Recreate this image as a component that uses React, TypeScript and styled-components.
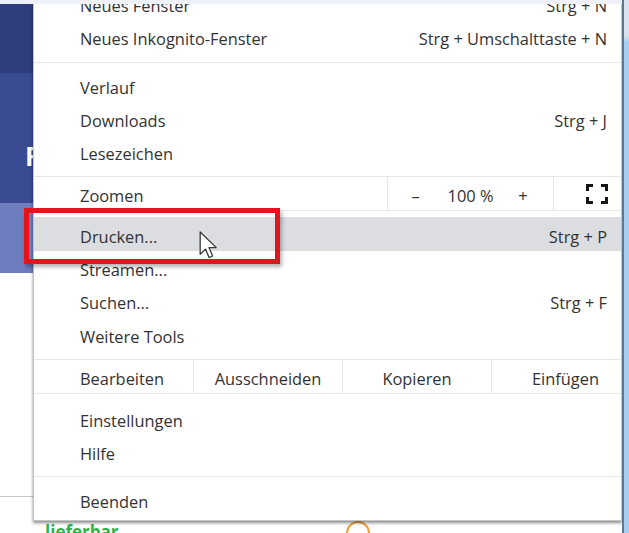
import React from "react";
import styled, { createGlobalStyle } from "styled-components";

const textDark = "#333333";
const lineLight = "#e7e7e7";
const menuFont = `"Open Sans", "Noto Sans", "DejaVu Sans", sans-serif`;

const GlobalStyle = createGlobalStyle`
  html, body {
    margin: 0;
    padding: 0;
    background: #ffffff;
  }
  body {
    width: 629px;
    height: 533px;
    overflow: hidden;
    font-family: ${menuFont};
  }
  *, *::before, *::after {
    box-sizing: border-box;
  }
`;

const Screen = styled.div`
  width: 629px;
  height: 533px;
  display: grid;
  grid-template-columns: 622px 7px;
  overflow: hidden;
`;

const Viewport = styled.div`
  position: relative;
  height: 533px;
  overflow: hidden;
`;

const WindowFrame = styled.div`
  border-left: 2px solid #61768f;
  background: linear-gradient(
    to bottom,
    #d8e3ef 0,
    #d8e3ef 36px,
    #a9cdef 42px,
    #a9cdef 100%
  );
`;

const TopStrip = styled.div`
  position: absolute;
  top: 0;
  left: 0;
  right: 0;
  height: 4px;
  background: #eef1f8;
  z-index: 4;
`;

/* page behind the menu */

const Backdrop = styled.div`
  display: flex;
  flex-direction: column;
  height: 100%;
`;

const Band = styled.div<{ $tone: string; $height: number }>`
  flex-shrink: 0;
  height: ${(p) => p.$height}px;
  background: ${(p) => p.$tone};
  padding: 70px 0 0 25px;
`;

const BandLetter = styled.span`
  display: block;
  color: #ffffff;
  font-family: ${menuFont};
  font-weight: 700;
  font-size: 26px;
  line-height: 1;
`;

const WhiteArea = styled.div`
  flex-shrink: 0;
  display: flex;
  flex-direction: column;
`;

const Rule = styled.div`
  margin-top: 223px;
  height: 1px;
  background: #c9c9c9;
`;

const BottomRow = styled.div`
  display: flex;
  align-items: flex-start;
  margin-top: 24px;
  padding-left: 45px;
`;

const StockLabel = styled.span`
  width: 301px;
  margin-top: 2px;
  color: #2eb24b;
  font-family: ${menuFont};
  font-weight: 700;
  font-size: 17px;
  line-height: 1;
`;

const StatusRing = styled.span`
  width: 24px;
  height: 24px;
  border-radius: 50%;
  border: 2px solid #f0a23a;
`;

/* the menu */

const MenuPanel = styled.div`
  position: absolute;
  left: 33px;
  top: -21px;
  width: 589px;
  background: #ffffff;
  border: 1px solid #c4c4c4;
  border-top: none;
  box-shadow: 0 2px 3px rgba(0, 0, 0, 0.45);
  padding: 8px 0 3px;
  font-family: ${menuFont};
  font-size: 16.4px;
  color: ${textDark};
  z-index: 1;
`;

const MenuItem = styled.div<{ $active?: boolean }>`
  height: 33.3px;
  display: flex;
  align-items: center;
  justify-content: space-between;
  padding: 4px 14px 0 46px;
  white-space: nowrap;
  background: ${(p) => (p.$active ? "#dcdde1" : "transparent")};
`;

const Shortcut = styled.span`
  color: ${textDark};
`;

const Separator = styled.div`
  padding: 8px 0 6px;
  &::after {
    content: "";
    display: block;
    height: 1px;
    background: ${lineLight};
  }
`;

const ButtonRow = styled.div<{ $gapBelow: number }>`
  display: flex;
  height: 35px;
  margin: 8px 0 ${(p) => p.$gapBelow}px;
  border-top: 1px solid ${lineLight};
  border-bottom: 1px solid ${lineLight};
  white-space: nowrap;
`;

const RowLabel = styled.div<{ $width: number }>`
  width: ${(p) => p.$width}px;
  display: flex;
  align-items: center;
  padding: 4px 0 0 46px;
`;

const RowCell = styled.div<{ $width?: number; $inset?: number }>`
  ${(p) => (p.$width ? `width: ${p.$width}px;` : "flex: 1;")}
  display: flex;
  align-items: center;
  justify-content: center;
  padding: 4px 0 0 ${(p) => p.$inset ?? 0}px;
  border-left: 1px solid ${lineLight};
`;

const ZoomControls = styled.div`
  width: 166px;
  display: grid;
  grid-template-columns: 55px 55px 1fr;
  align-items: center;
  padding: 4px 5px 0 0;
  border-left: 1px solid ${lineLight};
`;

const ZoomPart = styled.span`
  text-align: center;
`;

const FullscreenCell = styled.div`
  flex: 1;
  display: flex;
  align-items: center;
  justify-content: flex-end;
  padding-right: 13px;
  border-left: 1px solid ${lineLight};
`;

/* annotation drawn over the screenshot */

const Callout = styled.div`
  position: absolute;
  left: 24px;
  top: 208px;
  width: 256px;
  height: 56px;
  border: 5px solid #e5131b;
  box-shadow: 2px 3px 4px rgba(0, 0, 0, 0.3);
  z-index: 2;
`;

const Pointer = styled.svg`
  position: absolute;
  left: 199px;
  top: 231px;
  z-index: 3;
`;

const FullscreenIcon = () => (
  <svg width="22" height="20" viewBox="0 0 22 20">
    <g fill="none" stroke="#151515" strokeWidth="3">
      <path d="M1.5 7V1.5H7" />
      <path d="M15 1.5H20.5V7" />
      <path d="M1.5 13V18.5H7" />
      <path d="M15 18.5H20.5V13" />
    </g>
  </svg>
);

const menuTop = [
  { label: "Neues Fenster", keys: "Strg + N" },
  { label: "Neues Inkognito-Fenster", keys: "Strg + Umschalttaste + N" },
];

const menuHistory = [
  { label: "Verlauf" },
  { label: "Downloads", keys: "Strg + J" },
  { label: "Lesezeichen" },
];

const menuTools = [
  { label: "Drucken...", keys: "Strg + P", active: true },
  { label: "Streamen..." },
  { label: "Suchen...", keys: "Strg + F" },
  { label: "Weitere Tools" },
];

const menuSettings = [{ label: "Einstellungen" }, { label: "Hilfe" }];

type Entry = { label: string; keys?: string; active?: boolean };

const Items = ({ entries }: { entries: Entry[] }) => (
  <>
    {entries.map((e) => (
      <MenuItem key={e.label} $active={e.active}>
        <span>{e.label}</span>
        {e.keys && <Shortcut>{e.keys}</Shortcut>}
      </MenuItem>
    ))}
  </>
);

const App = () => {
  return (
    <Screen>
      <GlobalStyle />
      <Viewport>
        <TopStrip />
        <Backdrop>
          <Band $tone="#2e3e7d" $height={73} style={{ padding: 0 }} />
          <Band $tone="#3a4a93" $height={130}>
            <BandLetter>F</BandLetter>
          </Band>
          <Band $tone="#6d7dbf" $height={70} style={{ padding: 0 }} />
          <WhiteArea>
            <Rule />
            <BottomRow>
              <StockLabel>lieferbar</StockLabel>
              <StatusRing />
            </BottomRow>
          </WhiteArea>
        </Backdrop>

        <MenuPanel>
          <Items entries={menuTop} />
          <Separator />
          <Items entries={menuHistory} />
          <ButtonRow $gapBelow={6}>
            <RowLabel $width={353}>Zoomen</RowLabel>
            <ZoomControls>
              <ZoomPart>–</ZoomPart>
              <ZoomPart>100 %</ZoomPart>
              <ZoomPart>+</ZoomPart>
            </ZoomControls>
            <FullscreenCell>
              <FullscreenIcon />
            </FullscreenCell>
          </ButtonRow>
          <Items entries={menuTools} />
          <ButtonRow $gapBelow={8}>
            <RowLabel $width={159}>Bearbeiten</RowLabel>
            <RowCell $width={149}>Ausschneiden</RowCell>
            <RowCell $width={149}>Kopieren</RowCell>
            <RowCell $inset={18}>Einfügen</RowCell>
          </ButtonRow>
          <Items entries={menuSettings} />
          <Separator />
          <Items entries={[{ label: "Beenden" }]} />
        </MenuPanel>

        <Callout />
        <Pointer width="19" height="28" viewBox="0 0 13 19.5">
          <path
            d="M0.7 0.7 L0.7 16.2 L4.4 12.6 L6.9 18.5 L9.4 17.4 L6.9 11.6 L11.9 11.6 Z"
            fill="#ffffff"
            stroke="#3a3a3a"
            strokeWidth="0.9"
            strokeLinejoin="round"
          />
        </Pointer>
      </Viewport>
      <WindowFrame />
    </Screen>
  );
};

export default App;
